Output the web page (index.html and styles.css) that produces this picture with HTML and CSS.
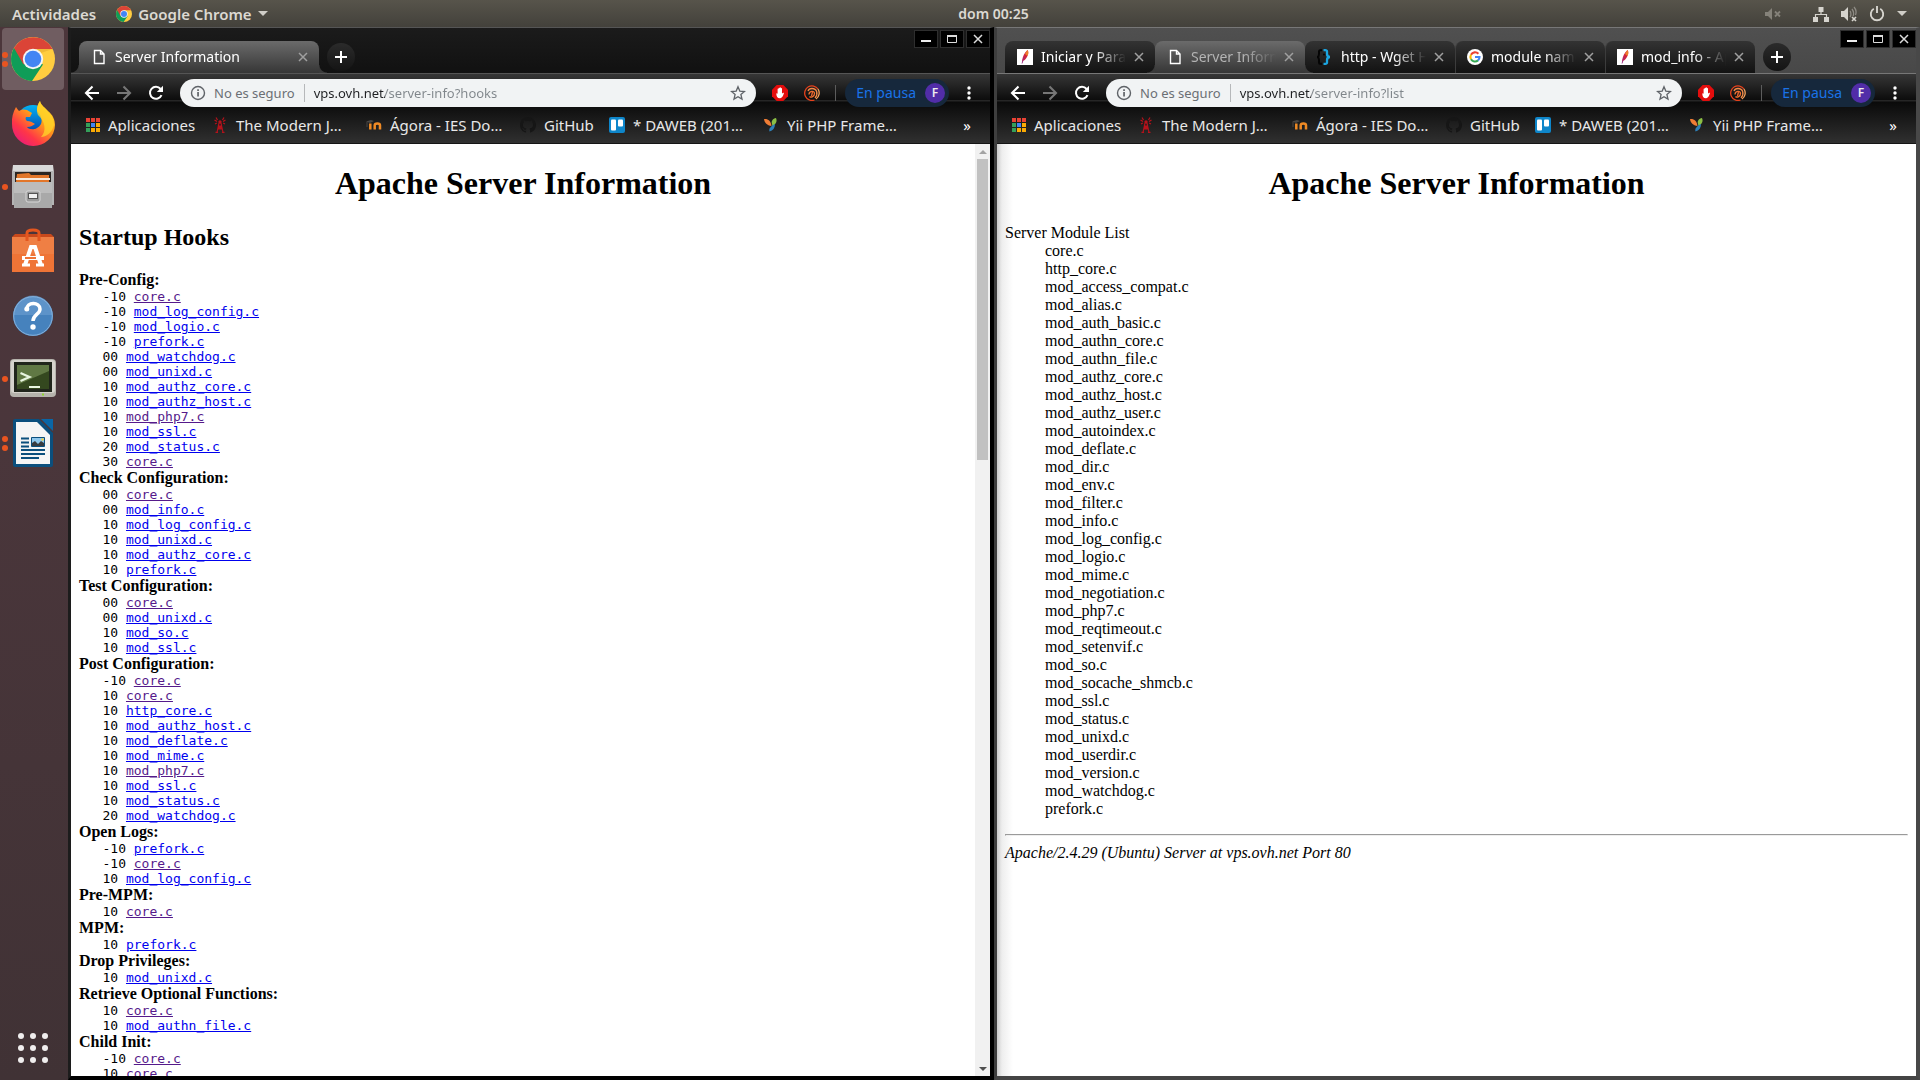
FILE: index.html
```html
<!DOCTYPE html>
<html lang="es">
<head>
<meta charset="utf-8">
<meta name="viewport" content="width=device-width, initial-scale=1">
<title>Server Information</title>
<link rel="stylesheet" href="styles.css">
</head>
<body>
<svg class="sprite" aria-hidden="true">
  <symbol id="i-chrome" viewBox="0 0 44 44">
    <circle cx="22" cy="22" r="22" fill="#ffcd40"/>
    <path d="M22 22 3 11A22 22 0 0 0 21 44L32 27.500z" fill="#0f9d58"/>
    <path d="M3 11A22 22 0 0 1 41.500 12H22L12.500 27.500z" fill="#db4437"/>
    <path d="M22 12H41.500L30 16z" fill="#e2a52b" opacity=".5"/>
    <circle cx="22" cy="22" r="10.200" fill="#f4f4f4"/>
    <circle cx="22" cy="22" r="8.300" fill="#4285f4"/>
  </symbol>
  <symbol id="i-doc" viewBox="0 0 16 16"><path d="M3.500 1.500h6l3.500 3.500v9.500H3.500zM9.500 1.500V5H13" fill="none" stroke="#fff" stroke-width="1.400"/></symbol>
  <symbol id="i-close" viewBox="0 0 10 10"><path d="M1 1l8 8M9 1l-8 8" fill="none" stroke="currentColor" stroke-width="1.500"/></symbol>
  <symbol id="i-plus" viewBox="0 0 12 12"><path d="M6 0v12M0 6h12" fill="none" stroke="#fff" stroke-width="2"/></symbol>
  <symbol id="i-back" viewBox="0 0 16 16"><path d="M15 8H2M8.500 1.500 2 8l6.500 6.500" fill="none" stroke="currentColor" stroke-width="2.100"/></symbol>
  <symbol id="i-forward" viewBox="0 0 16 16"><path d="M1 8h13M7.500 1.500 14 8l-6.500 6.500" fill="none" stroke="currentColor" stroke-width="2.100"/></symbol>
  <symbol id="i-reload" viewBox="0 0 16 16"><path d="M13.500 10.200A6 6 0 1 1 12.600 4" fill="none" stroke="currentColor" stroke-width="2"/><path d="M15 .8V7H8.800z" fill="currentColor"/></symbol>
  <symbol id="i-info" viewBox="0 0 16 16"><circle cx="8" cy="8" r="6.500" fill="none" stroke="#5f6368" stroke-width="1.400"/><path d="M7.200 7h1.700v4.500H7.200zM7.200 4.300h1.700V6H7.200z" fill="#5f6368"/></symbol>
  <symbol id="i-star" viewBox="0 0 16 16"><path d="M8 1.800l1.800 4.300 4.700.4-3.600 3 1.100 4.600L8 11.700l-4 2.400 1.100-4.600-3.600-3 4.700-.4z" fill="none" stroke="#5f6368" stroke-width="1.300"/></symbol>
  <symbol id="i-stop" viewBox="0 0 16 16"><path d="M4.700 0h6.600L16 4.700v6.600L11.300 16H4.700L0 11.300V4.700z" fill="#e40d0d"/><path d="M4.300 8.800c0-.9.900-.9 1.300 0V4.200c0-.8 1-.8 1 0V3.300c0-.8 1.100-.8 1.100 0v-.5c0-.8 1.200-.8 1.200 0v.8c0-.8 1.100-.8 1.100 0v5.200c.5-1 1.800-1.300 1.900-.5-.6 1.500-1.300 4.800-3.800 5-2.700.1-3.700-2-3.800-4.500z" fill="#fff"/></symbol>
  <symbol id="i-spiral" viewBox="0 0 16 16"><g fill="none" stroke-width="1.300"><path d="M10.500 15A7.300 7.300 0 1 1 14 4" stroke="#e8421c"/><path d="M14 4a7.300 7.300 0 0 1-2 10" stroke="#f5a15a"/><path d="M11 13c3.500-4 2-9.500-3-9.500-2 0-3.500 1-4 2.500" stroke="#f28a48"/><path d="M5 9.500C5 6 10.500 5 10.500 8.500c0 3-3.500 4.500-5 3" stroke="#f2702f"/><path d="M8.500 7 7.500 11" stroke="#ee6630"/></g></symbol>
  <symbol id="i-dots" viewBox="0 0 4 14"><circle cx="2" cy="2" r="1.700" fill="#fff"/><circle cx="2" cy="7" r="1.700" fill="#fff"/><circle cx="2" cy="12" r="1.700" fill="#fff"/></symbol>
  <symbol id="i-apps" viewBox="0 0 14 14"><path d="M0 0h4v4H0zM5 0h4v4H5zM10 0h4v4h-4z" fill="#ea4335"/><path d="M0 5h4v4H0zM0 10h4v4H0z" fill="#34a05a"/><path d="M5 5h4v4H5z" fill="#4285f4"/><path d="M10 5h4v4h-4zM5 10h4v4H5zM10 10h4v4h-4z" fill="#fbab05"/></symbol>
  <symbol id="i-tower" viewBox="0 0 16 16"><g fill="none" stroke="#b5121b" stroke-width="1.200"><path d="M7 6 5 15.500M9 6l2 9.500M6.500 9h3M6 12h4.500M3.500 15.300h2.500M10 15.300h2.500M6 12l3.500-3M10 12 6.500 9"/><path d="M5 4.500 2.500 3M5.500 3 4 .5M11 4.500 13.500 3M10.500 3 12 .5M4.800 6 3 7M11.200 6 13 7"/></g><circle cx="8" cy="5" r="1.700" fill="#b5121b"/></symbol>
  <symbol id="i-moodle" viewBox="0 0 16 16"><path d="M0 4.500 5 3l3 1-4 2z" fill="#4a4744"/><path d="M1 5v5" stroke="#4a4744"/><path d="M4.300 12.500V6.500M8.700 12.500V8.200c0-2.400 5.300-2.400 5.300 0v4.300" fill="none" stroke="#f08a24" stroke-width="2.500"/></symbol>
  <symbol id="i-github" viewBox="0 0 16 16"><path d="M8 0C3.580 0 0 3.580 0 8c0 3.540 2.290 6.530 5.470 7.590.4.070.55-.17.55-.38v-1.490c-2.230.48-2.700-.94-2.700-.94-.36-.92-.89-1.170-.89-1.170-.73-.5.050-.49.050-.49.800.060 1.230.83 1.230.83.710 1.230 1.870.87 2.330.66.070-.52.280-.87.510-1.070-1.780-.2-3.640-.89-3.640-3.950 0-.87.310-1.590.82-2.150-.08-.2-.36-1.020.08-2.120 0 0 .67-.21 2.200.82a7.600 7.600 0 0 1 4 0c1.530-1.040 2.200-.82 2.200-.82.440 1.100.16 1.920.08 2.120.51.560.82 1.270.82 2.150 0 3.070-1.870 3.750-3.650 3.950.29.250.54.730.54 1.480v2.190c0 .21.150.46.550.38A8 8 0 0 0 8 0z" fill="#161616"/></symbol>
  <symbol id="i-trello" viewBox="0 0 16 16"><rect width="16" height="16" rx="2" fill="#0e86ca"/><rect x="2" y="2.500" width="5" height="11" rx="1" fill="#fff"/><rect x="9" y="2.500" width="5" height="7" rx="1" fill="#fff"/></symbol>
  <symbol id="i-yii" viewBox="0 0 16 16"><path d="M1 2c4-.5 7 2 7.500 7C4 8.500 1.500 6 1 2z" fill="#f07d35"/><path d="M9 7C8 4 10 1.500 13 1c1.500 3 0 6.500-3.500 8z" fill="#8bbf45"/><path d="M12 7c0 4-2 6.500-5.500 7.500C5.500 11.500 8 9 12 7z" fill="#2f80b8"/></symbol>
  <symbol id="i-feather" viewBox="0 0 16 16"><path d="M0 0h16v16H0z" fill="#fff"/><path d="M5 14.500c0-5 1.500-10 5.500-13.500 1.500 2 .5 6-1.500 8.500-1 1.500-2.300 2-3 2.500z" fill="#cf2340"/><path d="M10.500 1c1.500 2 .9 4 0 6L8 5c.7-1.700 1.500-3 2.500-4z" fill="#ef7d2a"/><path d="M5 14.500 7 8" stroke="#8a2a8b" stroke-width=".8"/></symbol>
  <symbol id="i-brace" viewBox="0 0 16 16"><path d="M5 1.200H3C1.800 1.200 2 3 2 5S1.800 7.500.5 8c1.300.5 1.500 1 1.500 3s-.2 3.800 1 3.800h2" fill="none" stroke="#050505" stroke-width="2"/><circle cx="7" cy="5.500" r="1" fill="#050505"/><path d="M6.500 1.200h2c2 0 1.500 1.800 1.500 3.500S10.500 8 13 8c-2.500 0-3 1.500-3 3.300s.5 3.500-1.500 3.500h-2" fill="none" stroke="#1ba5e0" stroke-width="2.300"/></symbol>
  <symbol id="i-google" viewBox="0 0 16 16"><circle cx="8" cy="8" r="8" fill="#fff"/><g fill="none" stroke-width="2.100"><path d="M11.400 4.800A4.600 4.600 0 0 0 4 5.700" stroke="#ea4335"/><path d="M4 5.700a4.600 4.600 0 0 0 0 4.600" stroke="#fbbc05"/><path d="M4 10.300a4.600 4.600 0 0 0 7 1.100" stroke="#34a853"/><path d="M11 11.400A4.500 4.500 0 0 0 12.500 8H8" stroke="#4285f4"/></g></symbol>
  <symbol id="i-min" viewBox="0 0 22 16"><path d="M6 10h10" stroke="#eee" stroke-width="2"/></symbol>
  <symbol id="i-max" viewBox="0 0 22 16"><path d="M6.500 5h9v6.500h-9z" fill="none" stroke="#ddd"/><path d="M6 5h10" stroke="#ddd" stroke-width="2"/></symbol>
  <symbol id="i-x" viewBox="0 0 22 16"><path d="M7 4l8 8M15 4l-8 8" stroke="#ddd" stroke-width="1.500"/></symbol>
</svg>

<header class="topbar">
  <nav class="topbar-left">
    <button>Actividades</button>
    <button class="app-menu"><svg class="ic16"><use href="#i-chrome"/></svg>Google Chrome <svg class="caret" viewBox="0 0 10 5"><path d="M0 0h10L5 5z" fill="#d0cec8"/></svg></button>
  </nav>
  <button class="clock">dom 00:25</button>
  <div class="tray">
    <svg class="tray-mic ic16" viewBox="0 0 16 16"><path d="M0 6h3l4-4v12l-4-4H0z" fill="#85827a"/><path d="M10 5.500l5 5M15 5.500l-5 5" stroke="#85827a" stroke-width="1.800"/></svg>
    <svg class="ic16" viewBox="0 0 16 16"><path d="M5.500 1h5v5h-5zM0 11h5v5H0zM11 11h5v5h-5z" fill="#d6d4ce"/><path d="M8 6v2.500M2.500 11V8.500h11V11" fill="none" stroke="#d6d4ce" stroke-width="1.200"/></svg>
    <svg class="ic16" viewBox="0 0 16 16"><path d="M0 5h3l4-4v14l-4-4H0z" fill="#d6d4ce"/><path d="M9 5c1.200 1.500 1.200 4.500 0 6M11 3c2.200 3 1.800 6 1 7M13 1c2.500 3 2.300 6 1.500 8" fill="none" stroke="#8e8b84" stroke-width="1.300"/><path d="M11 11l4 4M15 11l-4 4" stroke="#d6d4ce" stroke-width="1.600"/></svg>
    <svg class="ic16" viewBox="0 0 16 16"><path d="M4.800 2.800a6.200 6.200 0 1 0 6.400 0M8 0v7" fill="none" stroke="#d6d4ce" stroke-width="1.900"/></svg>
    <svg class="caret" viewBox="0 0 10 5"><path d="M0 0h10L5 5z" fill="#d0cec8"/></svg>
  </div>
</header>

<div class="desktop">
  <nav class="dock">
    <button class="tile active" aria-label="Google Chrome"><i class="dots"><b></b><b></b></i><svg class="ic44"><use href="#i-chrome"/></svg></button>
    <button class="tile" aria-label="Firefox"><svg class="ic44" viewBox="0 0 44 44">
      <defs><linearGradient id="fx" x1=".9" y1="0" x2=".1" y2="1"><stop offset="0" stop-color="#ffe226"/><stop offset=".4" stop-color="#ff9a1a"/><stop offset=".7" stop-color="#ff3647"/><stop offset="1" stop-color="#e31587"/></linearGradient><linearGradient id="fb" x1="0" y1="0" x2="0" y2="1"><stop offset="0" stop-color="#00b3f4"/><stop offset="1" stop-color="#0a2a9c"/></linearGradient></defs>
      <circle cx="22" cy="21" r="17" fill="url(#fb)"/>
      <path d="M5 6c1 1.500 2 3 3 4 2-1.500 5-2 8-1l5 3-2 4h-4c-1 2 0 3 1 4 3 0 5 1 8 3-2 1-4 3-8 3 2 3 10 4 14-3 2-5-1-10-4-13 0-4 1-7 3-10 1 5 6 7 8 10 5 4 7 9 7 14a21.500 21.500 0 0 1-43-1C.5 17 2 11 5 6z" fill="url(#fx)"/>
      <path d="M29 0c1 5 6 7 8 11 5 4 6 9 6 13-2 8-8 12-13 12 6-6 4-16-3-22-2-5-1-10 2-14z" fill="#ffd52a" opacity=".75"/>
    </svg></button>
    <button class="tile" aria-label="Archivos"><i class="dots"><b></b></i><svg class="ic44" viewBox="0 0 44 44">
      <path d="M2 0h40l1 8H1z" fill="#d9d9d9"/><path d="M1 6h42v34H1z" fill="#b4b4b4"/><path d="M4 7h36v10H4z" fill="#2b2522"/><path d="M6 9l12-1 2 2h18v7H5z" fill="#e2762a"/><path d="M5 13h34v2H5z" fill="#f8e9dc"/><path d="M3 17h38v26H3z" fill="#a9a9a9"/><path d="M3 17h38v11H3z" fill="#bcbcbc"/><rect x="15" y="26" width="14" height="11" rx="2" fill="#9a9a9a" stroke="#d8d8d8"/><rect x="17.500" y="28.500" width="9" height="5" fill="#f2f2f2" stroke="#555"/>
    </svg></button>
    <button class="tile" aria-label="Software de Ubuntu"><svg class="ic44" viewBox="0 0 44 44">
      <path d="M1 8h42v35H1z" fill="#ef7436"/><path d="M1 8h42v17H1z" fill="#f08a52" opacity=".5"/><path d="M1 8l3-3h36l3 3z" fill="#c8491c"/><path d="M16 12V4c0-4 12-4 12 0v8" fill="none" stroke="#e4571f" stroke-width="3"/><path d="M14 36 20 18h4l6 18M11 29h22" fill="none" stroke="#fff" stroke-width="4"/><path d="M14 29h11" stroke="#ef7436" stroke-width="2"/><path d="M11 36h8M25 36h8" stroke="#fff" stroke-width="3"/>
    </svg></button>
    <button class="tile" aria-label="Ayuda"><svg class="ic44" viewBox="0 0 44 44">
      <circle cx="22" cy="23" r="20" fill="#4682bd"/><path d="M2.500 22a19.500 19.500 0 0 1 39 0z" fill="#6d9fd0" opacity=".6"/><circle cx="22" cy="23" r="19.300" fill="none" stroke="#86b1da"/><path d="M15.500 17c0-8.500 13.500-8.500 13.500-1 0 5.500-7 5.500-7 12" fill="none" stroke="#fff" stroke-width="3.500"/><circle cx="15.800" cy="16" r="2.500" fill="#fff"/><circle cx="22" cy="34" r="2.700" fill="#fff"/>
    </svg></button>
    <button class="tile" aria-label="Terminal"><i class="dots"><b></b></i><svg class="ic44" viewBox="0 0 44 42">
      <rect x="-1" y="1" width="46" height="38" rx="4" fill="#b5b3ac"/><rect x="0" y="2" width="44" height="33" rx="3" fill="#d5d3cc"/><rect x="3" y="4" width="38" height="30" fill="#20251b"/><rect x="6" y="7" width="32" height="24" fill="#34481f"/><path d="M6 7h32v6L6 27z" fill="#7f9a5e" opacity=".6"/><path d="M9.500 15l9 4-9 4" fill="none" stroke="#e8f5e0" stroke-width="2.200"/><path d="M18 29h11" stroke="#e8f5e0" stroke-width="2"/><path d="M31 36.500h2" stroke="#8ed52f" stroke-width="2"/>
    </svg></button>
    <button class="tile" aria-label="LibreOffice Writer"><i class="dots"><b></b><b></b></i><svg class="ic48" viewBox="0 0 48 48">
      <path d="M6 0h24l14 14v32a2 2 0 0 1-2 2H6a2 2 0 0 1-2-2V2a2 2 0 0 1 2-2z" fill="#0b4f7d"/><path d="M32 0h12v12z" fill="#0a66a6"/><path d="M7 3h21l13 13v29H7z" fill="#f5f5f5"/><path d="M12 19.500h8M12 23.500h8M12 27.500h8M12 31h24M12 35h24M12 39h18" stroke="#0b4f7d" stroke-width="2"/><path d="M22.500 18.500h13v9h-13z" fill="#8ec7ec" stroke="#0b4f7d"/><path d="M23 27v-3l3-2 3 3 3-3 3 2v3z" fill="#383c40"/><circle cx="33.500" cy="20.500" r="1.200" fill="#f4d03a"/>
    </svg></button>
    <button class="tile show-apps" aria-label="Mostrar aplicaciones"><svg class="ic44" viewBox="0 0 44 44"><g fill="#f0eeee"><circle cx="10" cy="10" r="3"/><circle cx="22" cy="10" r="3"/><circle cx="34" cy="10" r="3"/><circle cx="10" cy="22" r="3"/><circle cx="22" cy="22" r="3"/><circle cx="34" cy="22" r="3"/><circle cx="10" cy="34" r="3"/><circle cx="22" cy="34" r="3"/><circle cx="34" cy="34" r="3"/></g></svg></button>
  </nav>

  <section class="window window-left">
    <div class="tabstrip">
      <div class="tab current wide"><svg class="ic16"><use href="#i-doc"/></svg><span class="tab-title">Server Information</span><button class="tab-close" aria-label="Cerrar"><svg class="ic10"><use href="#i-close"/></svg></button></div>
      <button class="new-tab" aria-label="Nueva pestaña"><svg class="ic12"><use href="#i-plus"/></svg></button>
      <div class="controls"><button aria-label="Minimizar"><svg><use href="#i-min"/></svg></button><button aria-label="Maximizar"><svg><use href="#i-max"/></svg></button><button aria-label="Cerrar ventana"><svg><use href="#i-x"/></svg></button></div>
    </div>
    <div class="chrome">
      <div class="toolbar">
        <button class="nav-btn" aria-label="Atrás"><svg class="ic16"><use href="#i-back"/></svg></button>
        <button class="nav-btn off" aria-label="Adelante"><svg class="ic16"><use href="#i-forward"/></svg></button>
        <button class="nav-btn" aria-label="Recargar"><svg class="ic16"><use href="#i-reload"/></svg></button>
        <div class="omnibox">
          <svg class="ic16"><use href="#i-info"/></svg><label for="url-1">No es seguro</label>
          <input id="url-1" type="text" value="vps.ovh.net/server-info?hooks">
          <button aria-label="Marcador"><svg class="ic16"><use href="#i-star"/></svg></button>
        </div>
        <button class="ext" aria-label="Bloqueador"><svg class="ic16"><use href="#i-stop"/></svg></button>
        <button class="ext" aria-label="Extensión"><svg class="ic16"><use href="#i-spiral"/></svg></button>
        <button class="profile">En pausa<span class="avatar">F</span></button>
        <button class="menu" aria-label="Menú"><svg><use href="#i-dots"/></svg></button>
      </div>
      <nav class="bookmarks">
        <a href="#" class="apps"><svg class="ic14"><use href="#i-apps"/></svg>Aplicaciones</a>
        <a href="#" class="long"><svg class="ic16"><use href="#i-tower"/></svg>The Modern J…</a>
        <a href="#" class="long"><svg class="ic16"><use href="#i-moodle"/></svg>Ágora - IES Do…</a>
        <a href="#" class="short"><svg class="ic16"><use href="#i-github"/></svg>GitHub</a>
        <a href="#" class="long"><svg class="ic16"><use href="#i-trello"/></svg>* DAWEB (201…</a>
        <a href="#" class="long"><svg class="ic16"><use href="#i-yii"/></svg>Yii PHP Frame…</a>
        <button class="more">»</button>
      </nav>
    </div>
    <div class="viewport">
      <main class="page">
        <h1>Apache Server Information</h1>
        <h2>Startup Hooks</h2>
        <h3>Pre-Config:</h3>
<pre>   -10 <a href="#" class="seen">core.c</a>
   -10 <a href="#">mod_log_config.c</a>
   -10 <a href="#">mod_logio.c</a>
   -10 <a href="#">prefork.c</a>
   00 <a href="#">mod_watchdog.c</a>
   00 <a href="#">mod_unixd.c</a>
   10 <a href="#">mod_authz_core.c</a>
   10 <a href="#">mod_authz_host.c</a>
   10 <a href="#" class="seen">mod_php7.c</a>
   10 <a href="#">mod_ssl.c</a>
   20 <a href="#">mod_status.c</a>
   30 <a href="#" class="seen">core.c</a></pre>
        <h3>Check Configuration:</h3>
<pre>   00 <a href="#" class="seen">core.c</a>
   00 <a href="#">mod_info.c</a>
   10 <a href="#">mod_log_config.c</a>
   10 <a href="#">mod_unixd.c</a>
   10 <a href="#">mod_authz_core.c</a>
   10 <a href="#">prefork.c</a></pre>
        <h3>Test Configuration:</h3>
<pre>   00 <a href="#" class="seen">core.c</a>
   00 <a href="#">mod_unixd.c</a>
   10 <a href="#">mod_so.c</a>
   10 <a href="#">mod_ssl.c</a></pre>
        <h3>Post Configuration:</h3>
<pre>   -10 <a href="#" class="seen">core.c</a>
   10 <a href="#" class="seen">core.c</a>
   10 <a href="#">http_core.c</a>
   10 <a href="#">mod_authz_host.c</a>
   10 <a href="#">mod_deflate.c</a>
   10 <a href="#">mod_mime.c</a>
   10 <a href="#" class="seen">mod_php7.c</a>
   10 <a href="#">mod_ssl.c</a>
   10 <a href="#">mod_status.c</a>
   20 <a href="#">mod_watchdog.c</a></pre>
        <h3>Open Logs:</h3>
<pre>   -10 <a href="#">prefork.c</a>
   -10 <a href="#" class="seen">core.c</a>
   10 <a href="#">mod_log_config.c</a></pre>
        <h3>Pre-MPM:</h3>
<pre>   10 <a href="#" class="seen">core.c</a></pre>
        <h3>MPM:</h3>
<pre>   10 <a href="#">prefork.c</a></pre>
        <h3>Drop Privileges:</h3>
<pre>   10 <a href="#">mod_unixd.c</a></pre>
        <h3>Retrieve Optional Functions:</h3>
<pre>   10 <a href="#" class="seen">core.c</a>
   10 <a href="#">mod_authn_file.c</a></pre>
        <h3>Child Init:</h3>
<pre>   -10 <a href="#" class="seen">core.c</a>
   10 <a href="#" class="seen">core.c</a></pre>
      </main>
      <div class="scrollbar">
        <button aria-label="Subir"><svg viewBox="0 0 8 4"><path d="M4 0l4 4H0z" fill="#a3a3a3"/></svg></button>
        <div class="track"><div class="thumb"></div></div>
        <button aria-label="Bajar"><svg viewBox="0 0 8 4"><path d="M0 0h8L4 4z" fill="#505050"/></svg></button>
      </div>
    </div>
  </section>

  <section class="window window-right">
    <div class="tabstrip">
      <div class="tab"><svg class="ic16"><use href="#i-feather"/></svg><span class="tab-title">Iniciar y Parar</span><button class="tab-close" aria-label="Cerrar"><svg class="ic10"><use href="#i-close"/></svg></button></div>
      <div class="tab current dim"><svg class="ic16"><use href="#i-doc"/></svg><span class="tab-title">Server Information</span><button class="tab-close" aria-label="Cerrar"><svg class="ic10"><use href="#i-close"/></svg></button></div>
      <div class="tab"><svg class="ic16"><use href="#i-brace"/></svg><span class="tab-title">http - Wget HTTP</span><button class="tab-close" aria-label="Cerrar"><svg class="ic10"><use href="#i-close"/></svg></button></div>
      <div class="tab split"><svg class="ic16"><use href="#i-google"/></svg><span class="tab-title">module name</span><button class="tab-close" aria-label="Cerrar"><svg class="ic10"><use href="#i-close"/></svg></button></div>
      <div class="tab split"><svg class="ic16"><use href="#i-feather"/></svg><span class="tab-title">mod_info - Apache</span><button class="tab-close" aria-label="Cerrar"><svg class="ic10"><use href="#i-close"/></svg></button></div>
      <button class="new-tab" aria-label="Nueva pestaña"><svg class="ic12"><use href="#i-plus"/></svg></button>
      <div class="controls"><button aria-label="Minimizar"><svg><use href="#i-min"/></svg></button><button aria-label="Maximizar"><svg><use href="#i-max"/></svg></button><button aria-label="Cerrar ventana"><svg><use href="#i-x"/></svg></button></div>
    </div>
    <div class="chrome">
      <div class="toolbar">
        <button class="nav-btn" aria-label="Atrás"><svg class="ic16"><use href="#i-back"/></svg></button>
        <button class="nav-btn off" aria-label="Adelante"><svg class="ic16"><use href="#i-forward"/></svg></button>
        <button class="nav-btn" aria-label="Recargar"><svg class="ic16"><use href="#i-reload"/></svg></button>
        <div class="omnibox">
          <svg class="ic16"><use href="#i-info"/></svg><label for="url-2">No es seguro</label>
          <input id="url-2" type="text" value="vps.ovh.net/server-info?list">
          <button aria-label="Marcador"><svg class="ic16"><use href="#i-star"/></svg></button>
        </div>
        <button class="ext" aria-label="Bloqueador"><svg class="ic16"><use href="#i-stop"/></svg></button>
        <button class="ext" aria-label="Extensión"><svg class="ic16"><use href="#i-spiral"/></svg></button>
        <button class="profile">En pausa<span class="avatar">F</span></button>
        <button class="menu" aria-label="Menú"><svg><use href="#i-dots"/></svg></button>
      </div>
      <nav class="bookmarks">
        <a href="#" class="apps"><svg class="ic14"><use href="#i-apps"/></svg>Aplicaciones</a>
        <a href="#" class="long"><svg class="ic16"><use href="#i-tower"/></svg>The Modern J…</a>
        <a href="#" class="long"><svg class="ic16"><use href="#i-moodle"/></svg>Ágora - IES Do…</a>
        <a href="#" class="short"><svg class="ic16"><use href="#i-github"/></svg>GitHub</a>
        <a href="#" class="long"><svg class="ic16"><use href="#i-trello"/></svg>* DAWEB (201…</a>
        <a href="#" class="long"><svg class="ic16"><use href="#i-yii"/></svg>Yii PHP Frame…</a>
        <button class="more">»</button>
      </nav>
    </div>
    <div class="viewport shaded">
      <main class="page">
        <h1>Apache Server Information</h1>
        <dl>
          <dt>Server Module List</dt>
          <dd>core.c</dd>
          <dd>http_core.c</dd>
          <dd>mod_access_compat.c</dd>
          <dd>mod_alias.c</dd>
          <dd>mod_auth_basic.c</dd>
          <dd>mod_authn_core.c</dd>
          <dd>mod_authn_file.c</dd>
          <dd>mod_authz_core.c</dd>
          <dd>mod_authz_host.c</dd>
          <dd>mod_authz_user.c</dd>
          <dd>mod_autoindex.c</dd>
          <dd>mod_deflate.c</dd>
          <dd>mod_dir.c</dd>
          <dd>mod_env.c</dd>
          <dd>mod_filter.c</dd>
          <dd>mod_info.c</dd>
          <dd>mod_log_config.c</dd>
          <dd>mod_logio.c</dd>
          <dd>mod_mime.c</dd>
          <dd>mod_negotiation.c</dd>
          <dd>mod_php7.c</dd>
          <dd>mod_reqtimeout.c</dd>
          <dd>mod_setenvif.c</dd>
          <dd>mod_so.c</dd>
          <dd>mod_socache_shmcb.c</dd>
          <dd>mod_ssl.c</dd>
          <dd>mod_status.c</dd>
          <dd>mod_unixd.c</dd>
          <dd>mod_userdir.c</dd>
          <dd>mod_version.c</dd>
          <dd>mod_watchdog.c</dd>
          <dd>prefork.c</dd>
        </dl>
        <hr>
        <address>Apache/2.4.29 (Ubuntu) Server at vps.ovh.net Port 80</address>
      </main>
    </div>
  </section>
</div>
</body>
</html>
```
FILE: styles.css
```css
* { box-sizing: border-box; }

body {
  margin: 0;
  height: 100vh;
  display: flex;
  flex-direction: column;
  overflow: hidden;
  background: #443438;
  font: 14px/20px "Noto Sans", "Open Sans", sans-serif;
}

button {
  padding: 0;
  border: 0;
  background: none;
  color: inherit;
  font: inherit;
  display: flex;
  align-items: center;
  justify-content: center;
}

svg { display: block; flex: none; overflow: visible; }
.sprite { position: absolute; width: 0; height: 0; }
.ic10 { width: 10px; height: 10px; }
.ic12 { width: 12px; height: 12px; }
.ic14 { width: 14px; height: 14px; }
.ic16 { width: 16px; height: 16px; }
.ic44 { width: 44px; height: 44px; }
.ic48 { width: 48px; height: 48px; }
.caret { width: 10px; height: 5px; }

/* Top bar */
.topbar {
  flex: none;
  height: 27px;
  padding: 0 13px 0 12px;
  display: grid;
  grid-template-columns: minmax(0, 1fr) auto minmax(0, 1fr);
  align-items: center;
  background: linear-gradient(#57544b, #43413b);
  color: #dcd9d2;
  font-weight: 600;
}
.topbar-left { display: flex; gap: 20px; font-size: 15px; }
.app-menu { gap: 6px; }
/* centred over the desktop beside the dock */
.clock { margin-left: 68px; }
.tray { display: flex; align-items: center; justify-content: flex-end; gap: 12px; }
.tray-mic { margin-right: 20px; }

.desktop {
  flex: 1;
  min-height: 0;
  display: grid;
  grid-template-columns: 68px minmax(0, 1fr) minmax(0, 1fr);
  grid-template-rows: minmax(0, 1fr);
}

/* Dock */
.dock {
  display: flex;
  flex-direction: column;
  gap: 2px;
  padding: 1px 4px 1px 2px;
  background: linear-gradient(#4c363b, #4a363b 40%, #403235);
}
.tile { position: relative; height: 62px; border-radius: 4px; }
.tile.active { background: #705d61; }
.show-apps { margin-top: auto; }
.dots {
  position: absolute;
  left: 0;
  top: 0;
  height: 100%;
  display: flex;
  flex-direction: column;
  justify-content: center;
  gap: 3px;
}
.dots b { width: 6px; height: 6px; border-radius: 50%; background: #e95420; }

/* Browser windows */
.window { display: flex; flex-direction: column; min-height: 0; border-style: solid; }
.window-left {
  border-width: 1px 4px 4px 3px;
  border-color: #555 #000 #000 #1c1c1c;
  background: #151515;
}
.window-right {
  border-width: 1px 4px 4px 3px;
  border-color: #777 #484848 #444 #3e3e3e;
  background: #4c4c4c;
}

.tabstrip { flex: none; height: 45px; display: flex; align-items: flex-end; padding-left: 8px; }
.window-left .tabstrip { background: linear-gradient(#1b1b1b, #111); }
.window-right .tabstrip { background: linear-gradient(#505050, #484848); }

.tab {
  flex: 0 1 150px;
  min-width: 0;
  height: 32px;
  display: flex;
  align-items: center;
  gap: 8px;
  padding: 0 11px 0 12px;
  border-radius: 8px 8px 0 0;
  background: linear-gradient(#333, #121212);
  color: #fff;
}
.tab.wide { flex-basis: 240px; }
.tab.current { position: relative; background: linear-gradient(#6b6b6b, #363636); }
.tab.current::before,
.tab.current::after {
  content: "";
  position: absolute;
  bottom: 0;
  width: 8px;
  height: 8px;
}
.tab.current::before { left: -8px; background: radial-gradient(circle at 0 0, transparent 7px, #3a3a3a 8px); }
.tab.current::after { right: -8px; background: radial-gradient(circle at 100% 0, transparent 7px, #3a3a3a 8px); }
.tab.dim { color: #b4b4b4; }
.tab.split { border-left: 1px solid #3c3c3c; padding-left: 11px; }
.tab-title {
  flex: 1;
  min-width: 0;
  overflow: hidden;
  white-space: nowrap;
  -webkit-mask-image: linear-gradient(to left, transparent, #000 32px);
  mask-image: linear-gradient(to left, transparent, #000 32px);
}
.tab-close { color: #a0a0a0; }

.new-tab {
  flex: none;
  width: 28px;
  height: 28px;
  margin: 0 0 2px 8px;
  border-radius: 50%;
  background: linear-gradient(#2b2b2b, #141414);
}

.controls { display: flex; gap: 4px; margin-left: auto; align-self: flex-start; padding: 3px 1px 0 0; }
.controls button { width: 22px; height: 16px; background: #000; outline: 1px solid #2e2e2e; }
.controls svg { width: 22px; height: 16px; }

.chrome {
  flex: none;
  background: linear-gradient(#383838, #0c0c0c 27px, #262626 27px, #262626 28px, #0a0a0a 29px, #303030 70px, #151515 70px);
}
.toolbar { height: 38px; display: flex; align-items: center; padding: 0 19px 0 13px; border-top: 1px solid #555; }
.window-right .toolbar { border-color: #777; }
.nav-btn { color: #fff; margin-right: 16px; }
.nav-btn.off { color: #777; }

.omnibox {
  flex: 1;
  min-width: 0;
  height: 28px;
  display: flex;
  align-items: center;
  padding: 0 10px;
  border-radius: 14px;
  background: #f1f3f4;
  color: #6b6f74;
  margin-right: 16px;
  font-size: 13px;
}
.omnibox label { margin-left: 8px; white-space: nowrap; }
.omnibox input {
  flex: 1;
  min-width: 0;
  height: 18px;
  margin-left: 9px;
  padding: 0 0 0 9px;
  border: 0;
  border-left: 1px solid #b6b8ba;
  outline: 0;
  font: inherit;
  color: transparent;
  background: linear-gradient(to right, #202124 80px, #80868b 80px);
  -webkit-background-clip: text;
  background-clip: text;
}
.ext { margin-right: 16px; }
.profile {
  position: relative;
  height: 28px;
  margin-left: 9px;
  padding: 0 4px 0 11px;
  gap: 9px;
  border-radius: 14px;
  background: #16283c;
  color: #1a73e8;
}
.profile::before { content: ""; position: absolute; left: -10px; top: 6px; width: 1px; height: 16px; background: #5c5c5c; }
.avatar { width: 20px; height: 20px; border-radius: 50%; background: #512da8; color: #eee; font-size: 12px; font-weight: 600; }
.menu { margin-left: 18px; }
.menu svg { width: 4px; height: 14px; }

.bookmarks { height: 33px; display: flex; align-items: center; gap: 17px; padding: 0 19px 6px 15px; color: #e8e8e8; font-size: 15px; }
.bookmarks a { display: flex; align-items: center; gap: 8px; color: inherit; text-decoration: none; white-space: nowrap; }
.bookmarks .apps { width: 109px; }
.bookmarks .long { width: 137px; }
.bookmarks .short { width: 72px; }
.more { margin-left: auto; color: #fff; }

/* Page area */
.viewport { flex: 1; min-height: 0; display: flex; background: #fff; overflow: hidden; }
.shaded { background: linear-gradient(to right, #ccc, #eee 5px, #fff 16px); }
.page { flex: 1; min-width: 0; padding: 0 8px; font: 16px/18px "Liberation Serif", serif; color: #000; }
.page h1 { margin: 21px 0 22px; font-size: 32px; line-height: 37px; text-align: center; }
.page h2 { margin: 0 0 20px; font-size: 24px; line-height: 27px; }
.page h3 { margin: 0; font-size: 16px; line-height: 18px; }
.page pre { margin: 0; font: 13px/15px "DejaVu Sans Mono", monospace; }
.page pre a { color: #00e; }
.page pre a.seen { color: #551a8b; }
.page dl { margin: 0 0 16px; }
.page dd { margin: 0 0 0 40px; }
.page hr { margin: 0 0 8px; }

.scrollbar { flex: none; width: 15px; display: flex; flex-direction: column; background: #f1f1f1; }
.scrollbar button { height: 15px; }
.scrollbar svg { width: 8px; height: 4px; }
.track { flex: 1; padding: 0 2px; }
.thumb { height: calc(100% / 3); background: #c1c1c1; }
```
